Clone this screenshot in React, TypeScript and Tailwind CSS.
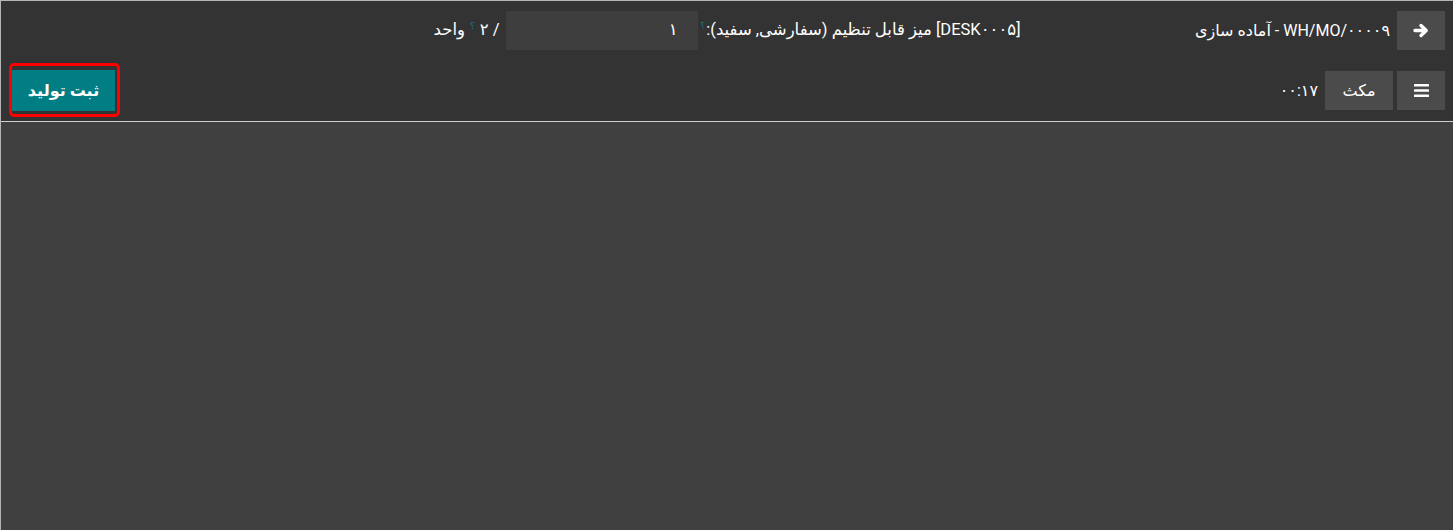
const font = "font-['Roboto','DejaVu_Sans',sans-serif]";

function ArrowIcon() {
  return (
    <svg width="16" height="15" viewBox="0 0 16 15" fill="none" stroke="white" strokeWidth="3.4" strokeLinecap="round" strokeLinejoin="round">
      <path d="M2 7.5H13M8 2.5L13.2 7.5L8 12.5" />
    </svg>
  );
}

function BarsIcon() {
  return (
    <svg width="15" height="13" viewBox="0 0 15 13" fill="white">
      <rect x="0" y="0" width="15" height="2.6" rx="0.6" />
      <rect x="0" y="5.2" width="15" height="2.6" rx="0.6" />
      <rect x="0" y="10.4" width="15" height="2.6" rx="0.6" />
    </svg>
  );
}

export default function App() {
  return (
    <div dir="rtl" className={`h-[530px] w-full bg-[#404040] border-t border-l border-[#b5b5b5] text-white ${font}`}>
      <div className="bg-[#333333] border-b border-[#cfcfcf] h-[121px] px-[8px] pt-[10px]">
        <div className="grid grid-cols-[1fr_auto_1fr] items-center h-[39px]">
          <div className="flex items-center gap-[7px]">
            <button className="w-[48px] h-[39px] bg-[#4b4b4b] flex items-center justify-center">
              <ArrowIcon />
            </button>
            <span className="text-[16px]">WH/MO/۰۰۰۰۹ - آماده سازی</span>
          </div>
          <div className="flex items-center text-[16.5px]">
            <span>[DESK۰۰۰۵] میز قابل تنظیم (سفارشی, سفید):</span>
            <sup className="text-[9px] text-[#017e84] mr-[1px] ml-[3px]">؟</sup>
            <div className="w-[192px] h-[39px] bg-[#3e3e3e] flex items-center px-[20px]">
              <span>۱</span>
            </div>
            <span className="mr-[6px]">/ ۲</span>
            <sup className="text-[9px] text-[#017e84] mx-[5px]">؟</sup>
            <span>واحد</span>
          </div>
          <div />
        </div>
        <div className="flex items-center justify-between mt-[20px] h-[41px]">
          <div className="flex items-center gap-[4px]">
            <button className="w-[48px] h-[39px] bg-[#4b4b4b] flex items-center justify-center">
              <BarsIcon />
            </button>
            <button className="w-[68px] h-[39px] bg-[#4b4b4b] text-[16px]">مکث</button>
            <span className="text-[16px] mr-[3px]">۰۰:۱۷</span>
          </div>
          <div className="relative ml-[3px]">
            <button className="h-[41px] w-[103px] bg-[#017e84] text-[16px] font-semibold">ثبت تولید</button>
            <span className="absolute -top-[7px] -bottom-[6px] -left-[3px] -right-[5px] rounded-[5px] border-[3px] border-[#ff0000]" />
          </div>
        </div>
      </div>
    </div>
  );
}
